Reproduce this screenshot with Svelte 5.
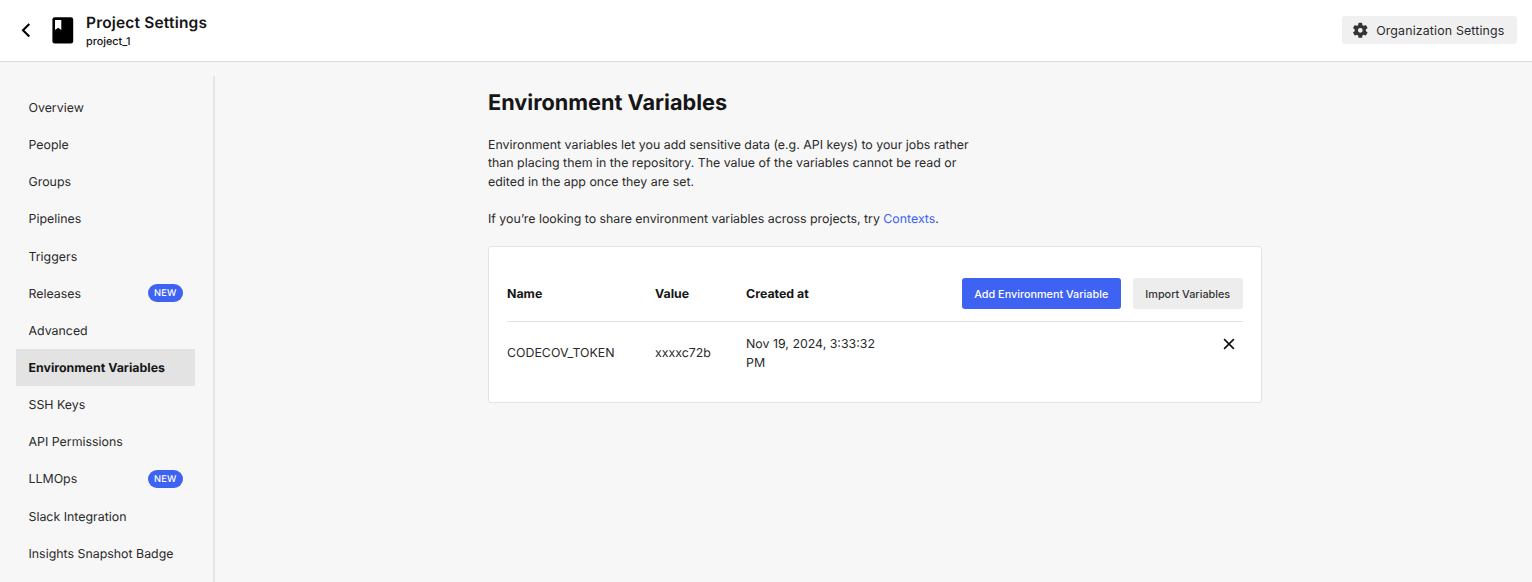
<script>
  const items = [
    { label: 'Overview' },
    { label: 'People' },
    { label: 'Groups' },
    { label: 'Pipelines' },
    { label: 'Triggers' },
    { label: 'Releases', isNew: true },
    { label: 'Advanced' },
    { label: 'Environment Variables', active: true },
    { label: 'SSH Keys' },
    { label: 'API Permissions' },
    { label: 'LLMOps', isNew: true },
    { label: 'Slack Integration' },
    { label: 'Insights Snapshot Badge' }
  ];
  const variables = [
    { name: 'CODECOV_TOKEN', value: 'xxxxc72b', created: 'Nov 19, 2024, 3:33:32 PM' }
  ];
</script>

<div class="page">
  <header>
    <button class="back" aria-label="Back">
      <svg width="10" height="16" viewBox="0 0 10 16"><path d="M8.3 1.9 2 8.2l6.3 6.3" fill="none" stroke="#000" stroke-width="2.1" /></svg>
    </button>
    <svg class="book" width="22" height="27" viewBox="0 0 22 27">
      <rect x=".4" y=".2" width="20.8" height="26.4" rx="2.4" fill="#000" />
      <path d="M3 2.9h6.3v10.2l-3.1-2.4L3 13.1z" fill="#fff" />
    </svg>
    <div class="titles">
      <div class="title">Project Settings</div>
      <div class="project">project_1</div>
    </div>
    <button class="org">
      <svg width="18.6" height="18.6" viewBox="0 0 24 24"><path fill="#343434" d="M19.14 12.94c.04-.3.06-.61.06-.94 0-.32-.02-.64-.07-.94l2.03-1.58a.49.49 0 0 0 .12-.61l-1.92-3.32a.49.49 0 0 0-.59-.22l-2.39.96c-.5-.38-1.03-.7-1.62-.94l-.36-2.54a.48.48 0 0 0-.48-.41h-3.84a.47.47 0 0 0-.47.41l-.36 2.54c-.59.24-1.13.57-1.62.94l-2.39-.96a.48.48 0 0 0-.59.22L2.74 8.87a.47.47 0 0 0 .12.61l2.03 1.58c-.05.3-.09.63-.09.94s.02.64.07.94l-2.03 1.58a.49.49 0 0 0-.12.61l1.92 3.32c.12.22.37.29.59.22l2.39-.96c.5.38 1.03.7 1.62.94l.36 2.54c.05.24.24.41.48.41h3.84c.24 0 .44-.17.47-.41l.36-2.54c.59-.24 1.13-.56 1.62-.94l2.39.96c.22.08.47 0 .59-.22l1.92-3.32a.47.47 0 0 0-.12-.61zM12 15.1a3.1 3.1 0 1 1 0-6.2 3.1 3.1 0 0 1 0 6.2z" /></svg>
      <span>Organization Settings</span>
    </button>
  </header>

  <div class="body">
    <nav>
      {#each items as item}
        <div class="item" class:active={item.active}>
          <span class="label">{item.label}</span>
          {#if item.isNew}<span class="badge">NEW</span>{/if}
        </div>
      {/each}
    </nav>

    <main>
      <h1>Environment Variables</h1>
      <p>Environment variables let you add sensitive data (e.g. API keys) to your jobs rather<br />than placing them in the repository. The value of the variables cannot be read or<br />edited in the app once they are set.</p>
      <p class="hint">If you’re looking to share environment variables across projects, try <span class="link">Contexts</span>.</p>

      <section class="card">
        <div class="row head">
          <div>Name</div>
          <div>Value</div>
          <div>Created at</div>
          <div class="actions">
            <button class="primary">Add Environment Variable</button>
            <button class="secondary">Import Variables</button>
          </div>
        </div>
        {#each variables as v}
          <div class="row data">
            <div>{v.name}</div>
            <div>{v.value}</div>
            <div class="created">{v.created}</div>
            <button class="remove" aria-label="Remove">
              <svg width="12" height="12" viewBox="0 0 12 12"><path d="m1.1 1.1 9.8 9.8m0-9.8-9.8 9.8" stroke="#111" stroke-width="1.6" /></svg>
            </button>
          </div>
        {/each}
      </section>
    </main>
  </div>
</div>

<style>
  .page {
    height: 582px;
    overflow: hidden;
    display: flex;
    flex-direction: column;
    background: #f7f7f7;
    color: #2a2a2a;
    font: 400 12.38px/18.58px Inter, sans-serif;
    letter-spacing: 0;
    text-rendering: geometricPrecision;
  }
  button {
    border: 0;
    margin: 0;
    padding: 0;
    background: none;
    font: inherit;
    letter-spacing: inherit;
    color: inherit;
    display: flex;
    align-items: center;
    justify-content: center;
    white-space: nowrap;
  }
  header {
    box-sizing: border-box;
    height: 62px;
    flex: none;
    display: flex;
    align-items: center;
    padding: 0 15.5px 1px 20.5px;
    background: #fff;
    border-bottom: 1px solid #dadada;
  }
  .back { width: 11px; }
  .book { margin-left: 20.5px; }
  .titles {
    margin: 4px 0 0 12px;
    color: #161616;
  }
  .title {
    font-size: 15.48px;
    font-weight: 600;
    line-height: 19px;
    letter-spacing: 0.19px;
  }
  .project {
    font-size: 10.8px;
    font-weight: 500;
    line-height: 19px;
    color: #111;
  }
  .org {
    box-sizing: border-box;
    margin-left: auto;
    width: 175px;
    height: 28px;
    padding-right: 2.5px;
    gap: 6.5px;
    border-radius: 3px;
    background: #f0f0f0;
    letter-spacing: 0.15px;
  }
  .org span { padding-top: 2px; }
  .body {
    flex: 1;
    display: flex;
    align-items: flex-start;
  }
  nav {
    box-sizing: border-box;
    flex: none;
    width: 215px;
    height: 520px;
    margin-top: 14.4px;
    padding: 12.4px 18.5px 0 16.3px;
    border-right: 2px solid #e6e6e6;
  }
  .item {
    box-sizing: border-box;
    height: 37.15px;
    display: flex;
    align-items: center;
    justify-content: space-between;
    padding: 0 11.7px 0 12.2px;
    white-space: nowrap;
  }
  .label { padding-top: 1.9px; }
  .active {
    background: #e3e3e3;
    color: #161616;
    font-weight: 700;
  }
  .badge {
    box-sizing: border-box;
    width: 35px;
    height: 18.5px;
    border-radius: 10px;
    background: #3e62f2;
    color: #fff;
    font-size: 9.3px;
    font-weight: 500;
    line-height: 20px;
    letter-spacing: 0.2px;
    text-align: center;
  }
  main {
    width: 774px;
    margin: 25.6px 0 0 273px;
  }
  h1 {
    margin: 0 0 17.3px;
    color: #161616;
    font-size: 21.7px;
    font-weight: 700;
    line-height: 31px;
  }
  p {
    margin: 0 0 18.6px;
    white-space: nowrap;
  }
  .hint {
    margin-bottom: 17.5px;
    letter-spacing: -0.02px;
  }
  .link { color: #3e62f2; }
  .card {
    box-sizing: border-box;
    height: 157px;
    padding: 19px 18px 0;
    background: #fff;
    border: 1px solid #e3e3e3;
    border-radius: 3px;
  }
  .row {
    display: grid;
    grid-template-columns: 148px 91px 146px 1fr;
    align-items: center;
  }
  .head {
    height: 55px;
    border-bottom: 1px solid #e3e3e3;
    color: #161616;
    font-weight: 700;
  }
  .data { height: 62.6px; }
  .actions {
    display: flex;
    justify-content: flex-end;
    gap: 12px;
    font-size: 10.84px;
    font-weight: 500;
  }
  .primary, .secondary {
    height: 31px;
    border-radius: 3px;
  }
  .primary {
    width: 158.5px;
    background: #3e62f2;
    color: #fff;
  }
  .secondary {
    width: 110.5px;
    background: #ededed;
    color: #343434;
  }
  .remove {
    justify-self: end;
    align-self: start;
    margin: 16px 8.5px 0 0;
  }
</style>
